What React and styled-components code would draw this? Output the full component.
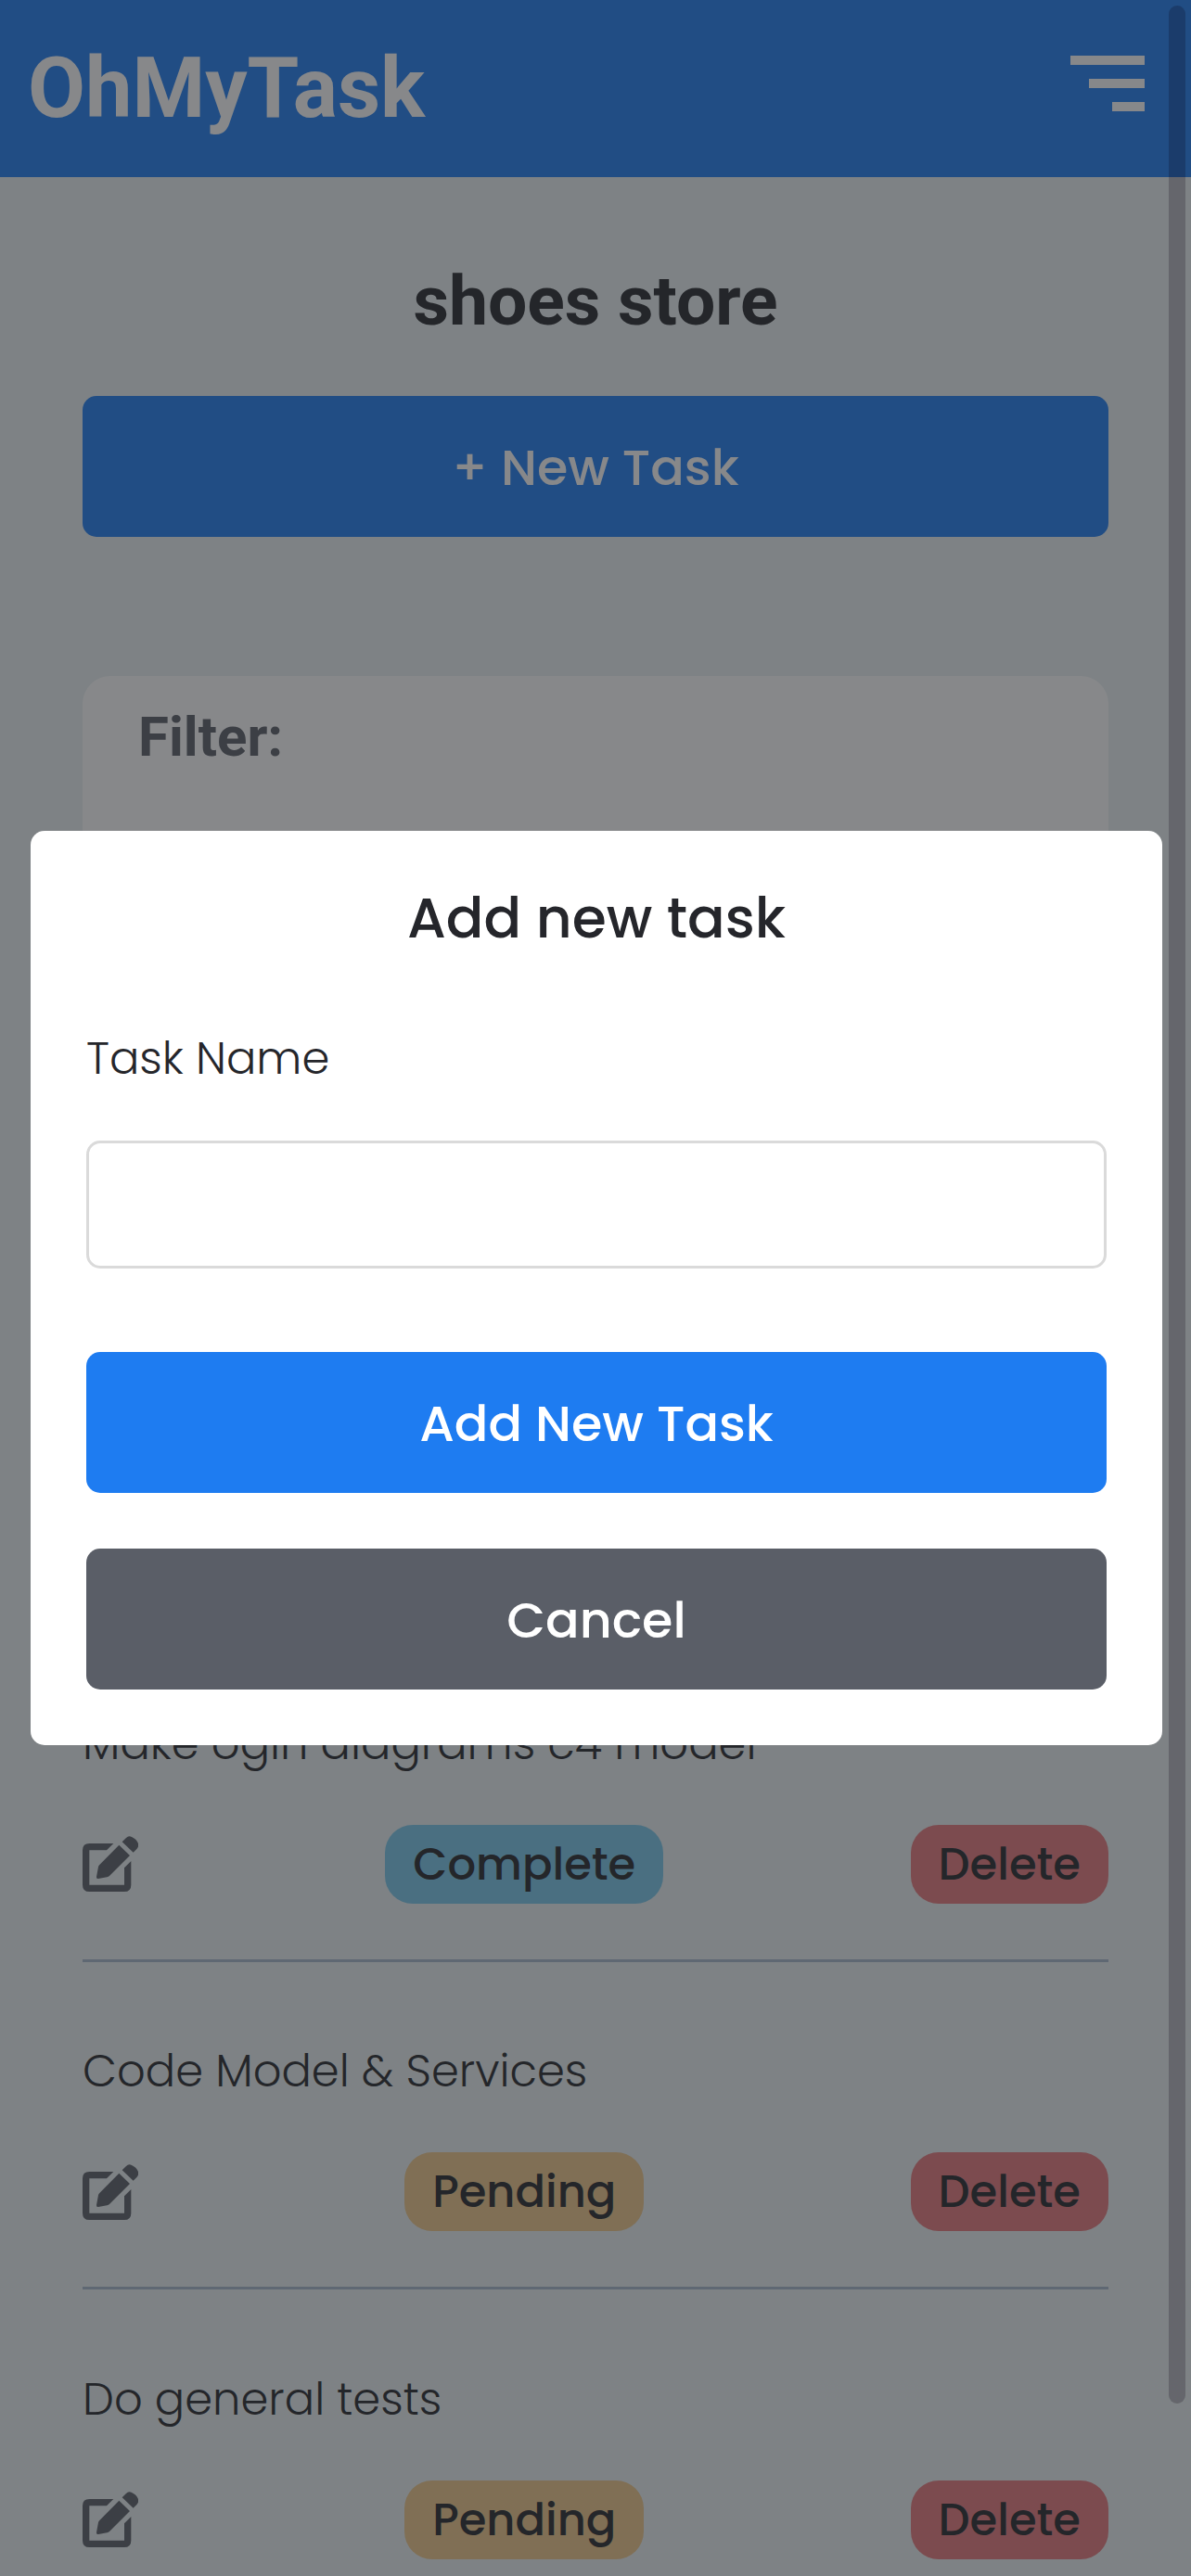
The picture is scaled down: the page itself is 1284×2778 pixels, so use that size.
import React from "react";
import styled, { createGlobalStyle } from "styled-components";

const heading = `Roboto, sans-serif`;
const blue = "#1e7cf1";
const slate = "#5a5e67";
const ink = "#25262b";

const GlobalStyle = createGlobalStyle`
  *, *::before, *::after { box-sizing: border-box; }
  html, body { margin: 0; height: 2778px; overflow: hidden; }
  body {
    background: #eaf2f3;
    color: ${ink};
    font-family: Poppins, Inter, sans-serif;
    font-size: 48px;
  }
`;

const Screen = styled.div`
  height: 2778px;
  overflow: hidden;
`;

const Header = styled.header`
  display: flex;
  align-items: center;
  justify-content: space-between;
  height: 191px;
  padding: 0 50px 0 30px;
  background: ${blue};
`;

const Logo = styled.h1`
  margin: 0;
  color: #fff;
  font: 700 90px/1 ${heading};
`;

const Menu = styled.div`
  display: flex;
  flex-direction: column;
  align-items: flex-end;
  gap: 15px;
  margin-top: -11px;
`;

const MenuBar = styled.span`
  width: ${(p) => p.$width}px;
  height: 10px;
  background: #fff;
`;

const Main = styled.main`
  display: flex;
  flex-direction: column;
  padding: 88px 89px 0;
`;

const ProjectTitle = styled.h2`
  margin: 0 0 58px;
  text-align: center;
  font: 700 75px/90px ${heading};
`;

const Button = styled.button`
  width: 100%;
  height: 152px;
  padding: 2px 0 0;
  border: 0;
  border-radius: 15px;
  background: ${(p) => (p.$muted ? slate : blue)};
  color: #fff;
  font: inherit;
  font-size: 54px;
  font-weight: 500;
`;

const FilterCard = styled.section`
  height: 853px;
  margin-top: 150px;
  padding: 30px 60px;
  border-radius: 30px;
  background: #fff;
`;

const FilterTitle = styled.h3`
  margin: 0;
  color: ${slate};
  font: 700 60px/71px ${heading};
`;

const TaskList = styled.ul`
  margin: 180.1px 0 0;
  padding: 0;
  list-style: none;
`;

const TaskRow = styled.li`
  display: flex;
  flex-direction: column;
  justify-content: flex-end;
  gap: 51px;
  height: 353.5px;
  padding-bottom: 60px;
  border-bottom: 3px solid #a6b8cd;
`;

const TaskName = styled.p`
  margin: 0;
  font-weight: 300;
  line-height: 72px;
`;

const TaskActions = styled.div`
  display: flex;
  align-items: center;
  justify-content: space-between;
`;

const Pill = styled.span`
  padding: 0 30px;
  border-radius: 30px;
  background: ${(p) => p.$color};
  font-weight: 500;
  line-height: 85px;
`;

const Overlay = styled.div`
  position: fixed;
  inset: 0;
  display: flex;
  align-items: center;
  padding: 0 31px 0 33px;
  background: rgba(37, 38, 42, 0.55);
`;

const Modal = styled.form`
  display: flex;
  flex-direction: column;
  width: 100%;
  padding: 60px;
  border-radius: 15px;
  background: #fff;
`;

const ModalTitle = styled.h2`
  margin: 0 0 81px;
  text-align: center;
  font-size: 60px;
  font-weight: 500;
  line-height: 69px;
`;

const Label = styled.label`
  margin-bottom: 52px;
  font-weight: 300;
  line-height: 72px;
`;

const Input = styled.input`
  width: 100%;
  height: 138px;
  margin-bottom: 90px;
  padding: 0 30px;
  border: 3px solid #dadada;
  border-radius: 15px;
  background: #fff;
  font: inherit;
  outline: 0;
`;

const ButtonStack = styled.div`
  display: flex;
  flex-direction: column;
  gap: 60px;
`;

const ScrollThumb = styled.div`
  position: fixed;
  top: 6px;
  right: 6px;
  width: 18px;
  height: 2586px;
  border-radius: 9px;
  background: rgba(8, 0, 12, 0.21);
`;

const EditIcon = () => (
  <svg width="60" height="60" viewBox="0 0 180 180" fill={slate} aria-label="Edit">
    <path d="M100 24H22Q0 24 0 46V158Q0 180 22 180H135Q157 180 157 158V81L135 103V158H22V46H78Z" />
    <path d="M118 29L153 63L87 129Q84 132 79 133L51 138Q44 139 45 132L51 100Q52 96 55 93Z" />
    <path d="M128 19L141 6Q149 -3 159 3Q173 9 179 22Q184 32 176 41L164 53Z" />
  </svg>
);

const STATUS_COLORS = {
  Complete: "#79c8ec",
  Pending: "#efc789",
};

const TASKS = [
  { name: "Make ogin diagrams c4 model", status: "Complete" },
  { name: "Code Model & Services", status: "Pending" },
  { name: "Do general tests", status: "Pending" },
];

function Task({ name, status }) {
  return (
    <TaskRow>
      <TaskName>{name}</TaskName>
      <TaskActions>
        <EditIcon />
        <Pill $color={STATUS_COLORS[status]}>{status}</Pill>
        <Pill $color="#e6797c">Delete</Pill>
      </TaskActions>
    </TaskRow>
  );
}

export default function App() {
  return (
    <>
      <GlobalStyle />
      <Screen>
        <Header>
          <Logo>OhMyTask</Logo>
          <Menu>
            <MenuBar $width={80} />
            <MenuBar $width={60} />
            <MenuBar $width={35} />
          </Menu>
        </Header>
        <Main>
          <ProjectTitle>shoes store</ProjectTitle>
          <Button>+ New Task</Button>
          <FilterCard>
            <FilterTitle>Filter:</FilterTitle>
          </FilterCard>
          <TaskList>
            {TASKS.map((t) => (
              <Task key={t.name} {...t} />
            ))}
          </TaskList>
        </Main>
      </Screen>
      <Overlay>
        <Modal>
          <ModalTitle>Add new task</ModalTitle>
          <Label htmlFor="task-name">Task Name</Label>
          <Input id="task-name" />
          <ButtonStack>
            <Button type="button">Add New Task</Button>
            <Button type="button" $muted>Cancel</Button>
          </ButtonStack>
        </Modal>
      </Overlay>
      <ScrollThumb />
    </>
  );
}
